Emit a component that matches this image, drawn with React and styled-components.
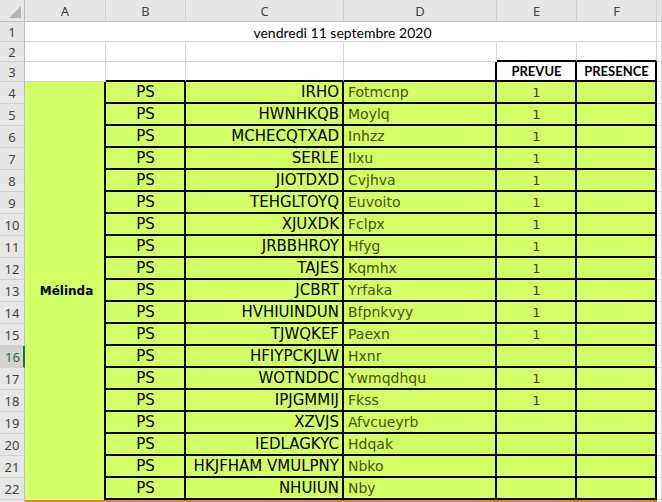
import React from 'react';
import styled, { createGlobalStyle } from 'styled-components';

const GlobalStyle = createGlobalStyle`
  html, body {
    margin: 0;
    padding: 0;
    background: #ffffff;
    overflow: hidden;
  }
`;

const GREEN = '#d2ff66';
const GRID = '#d4d4d4';

const Sheet = styled.div`
  display: grid;
  grid-template-columns: 25px 81px 80px 158px 153px 80px 80px 1fr;
  grid-template-rows: 22px repeat(3, 20px) repeat(20, 22px);
  width: 662px;
  height: 502px;
  overflow: hidden;
  font-family: 'DejaVu Sans', 'Liberation Sans', sans-serif;
`;

const Corner = styled.div`
  background: #e6e6e6;
  border-right: 1px solid #bdbdbd;
  border-bottom: 1px solid #bdbdbd;
  box-sizing: border-box;
  display: flex;
  align-items: flex-end;
  justify-content: flex-end;
  padding: 0 3px 3px 0;
`;

const ColHeader = styled.div`
  background: #e6e6e6;
  border-right: 1px solid #cfcfcf;
  border-bottom: 1px solid #bdbdbd;
  box-sizing: border-box;
  display: flex;
  align-items: center;
  justify-content: center;
  font-family: 'Noto Sans', 'Open Sans', sans-serif;
  font-size: 13px;
  color: #444444;
  padding-top: 1px;
`;

const RowHeader = styled.div`
  background: ${(p) => (p.$active ? '#d2d2d2' : '#e6e6e6')};
  border-right: ${(p) => (p.$active ? '2px solid #217346' : '1px solid #bdbdbd')};
  border-bottom: 1px solid #cfcfcf;
  box-sizing: border-box;
  display: flex;
  align-items: center;
  justify-content: center;
  font-family: 'Noto Sans', 'Open Sans', sans-serif;
  font-size: 13px;
  color: ${(p) => (p.$active ? '#1e6b41' : '#444444')};
  padding-left: ${(p) => (p.$active ? '2px' : '0')};
`;

const Blank = styled.div`
  box-sizing: border-box;
  background: ${(p) => p.$fill || '#ffffff'};
  border-right: ${(p) => (p.$blackRight ? '2px solid #000' : `1px solid ${GRID}`)};
  border-bottom: ${(p) => (p.$blackBottom ? '2px solid #000' : `1px solid ${GRID}`)};
`;

const Title = styled.div`
  grid-column: span 6;
  box-sizing: border-box;
  border-right: 1px solid ${GRID};
  border-bottom: 1px solid ${GRID};
  display: flex;
  align-items: center;
  justify-content: center;
  font-family: Lato, 'Open Sans', sans-serif;
  font-size: 14px;
  color: #000;
  padding: 2px 0 0 4px;
`;

const Box = styled.div`
  box-sizing: border-box;
  background: ${(p) => p.$fill || GREEN};
  border-right: 2px solid #000;
  border-bottom: 2px solid #000;
  display: flex;
  align-items: center;
  justify-content: ${(p) => p.$align || 'center'};
  padding: 0 3px 0 4px;
  white-space: nowrap;
  overflow: visible;
  font-size: ${(p) => p.$size || '15px'};
  color: ${(p) => p.$color || '#000'};
  font-weight: ${(p) => (p.$bold ? 700 : 400)};
  font-family: ${(p) => (p.$label ? "Lato, 'Open Sans', sans-serif" : "'DejaVu Sans', sans-serif")};
`;

const NameCell = styled.div`
  grid-row: span 19;
  box-sizing: border-box;
  background: ${GREEN};
  border-right: 2px solid #000;
  display: flex;
  align-items: center;
  justify-content: center;
  font-weight: 700;
  font-size: 12px;
  color: #000;
  padding-left: 4px;
`;

const FooterCell = styled.div`
  box-sizing: border-box;
  background: ${GREEN};
  border-top: 2px solid #ed7d31;
`;

const rows = [
  ['IRHO', 'Fotmcnp', 1],
  ['HWNHKQB', 'Moylq', 1],
  ['MCHECQTXAD', 'Inhzz', 1],
  ['SERLE', 'Ilxu', 1],
  ['JIOTDXD', 'Cvjhva', 1],
  ['TEHGLTOYQ', 'Euvoito', 1],
  ['XJUXDK', 'Fclpx', 1],
  ['JRBBHROY', 'Hfyg', 1],
  ['TAJES', 'Kqmhx', 1],
  ['JCBRT', 'Yrfaka', 1],
  ['HVHIUINDUN', 'Bfpnkvyy', 1],
  ['TJWQKEF', 'Paexn', 1],
  ['HFIYPCKJLW', 'Hxnr', null],
  ['WOTNDDC', 'Ywmqdhqu', 1],
  ['IPJGMMIJ', 'Fkss', 1],
  ['XZVJS', 'Afvcueyrb', null],
  ['IEDLAGKYC', 'Hdqak', null],
  ['HKJFHAM VMULPNY', 'Nbko', null],
  ['NHUIUN', 'Nby', null],
];

function CornerMark() {
  return (
    <svg width="12" height="12" viewBox="0 0 12 12">
      <polygon points="12,0 12,12 0,12" fill="#b4b4b4" />
    </svg>
  );
}

export default function App() {
  return (
    <>
      <GlobalStyle />
      <Sheet>
        <Corner>
          <CornerMark />
        </Corner>
        {['A', 'B', 'C', 'D', 'E', 'F', ''].map((c, i) => (
          <ColHeader key={i}>{c}</ColHeader>
        ))}

        <RowHeader>1</RowHeader>
        <Title>vendredi 11 septembre 2020</Title>
        <Blank />

        <RowHeader>2</RowHeader>
        <Blank />
        <Blank />
        <Blank />
        <Blank />
        <Blank $blackBottom />
        <Blank $blackBottom />
        <Blank />

        <RowHeader>3</RowHeader>
        <Blank />
        <Blank $blackBottom />
        <Blank $blackBottom />
        <Blank $blackBottom $blackRight />
        <Box $fill="#fff" $bold $label $size="13px">PREVUE</Box>
        <Box $fill="#fff" $bold $label $size="13px">PRESENCE</Box>
        <Blank />

        {rows.map(([code, name, planned], i) => (
          <React.Fragment key={code}>
            <RowHeader $active={i + 4 === 16}>{i + 4}</RowHeader>
            {i === 0 && <NameCell>Mélinda</NameCell>}
            <Box>PS</Box>
            <Box $align="flex-end">{code}</Box>
            <Box $align="flex-start" $color="#45520f" $size="14px">{name}</Box>
            <Box $color="#4a3a10" $size="13px">{planned}</Box>
            <Box />
            <Blank />
          </React.Fragment>
        ))}

        <RowHeader />
        {[0, 1, 2, 3, 4, 5].map((k) => (
          <FooterCell key={k} />
        ))}
        <Blank />
      </Sheet>
    </>
  );
}
